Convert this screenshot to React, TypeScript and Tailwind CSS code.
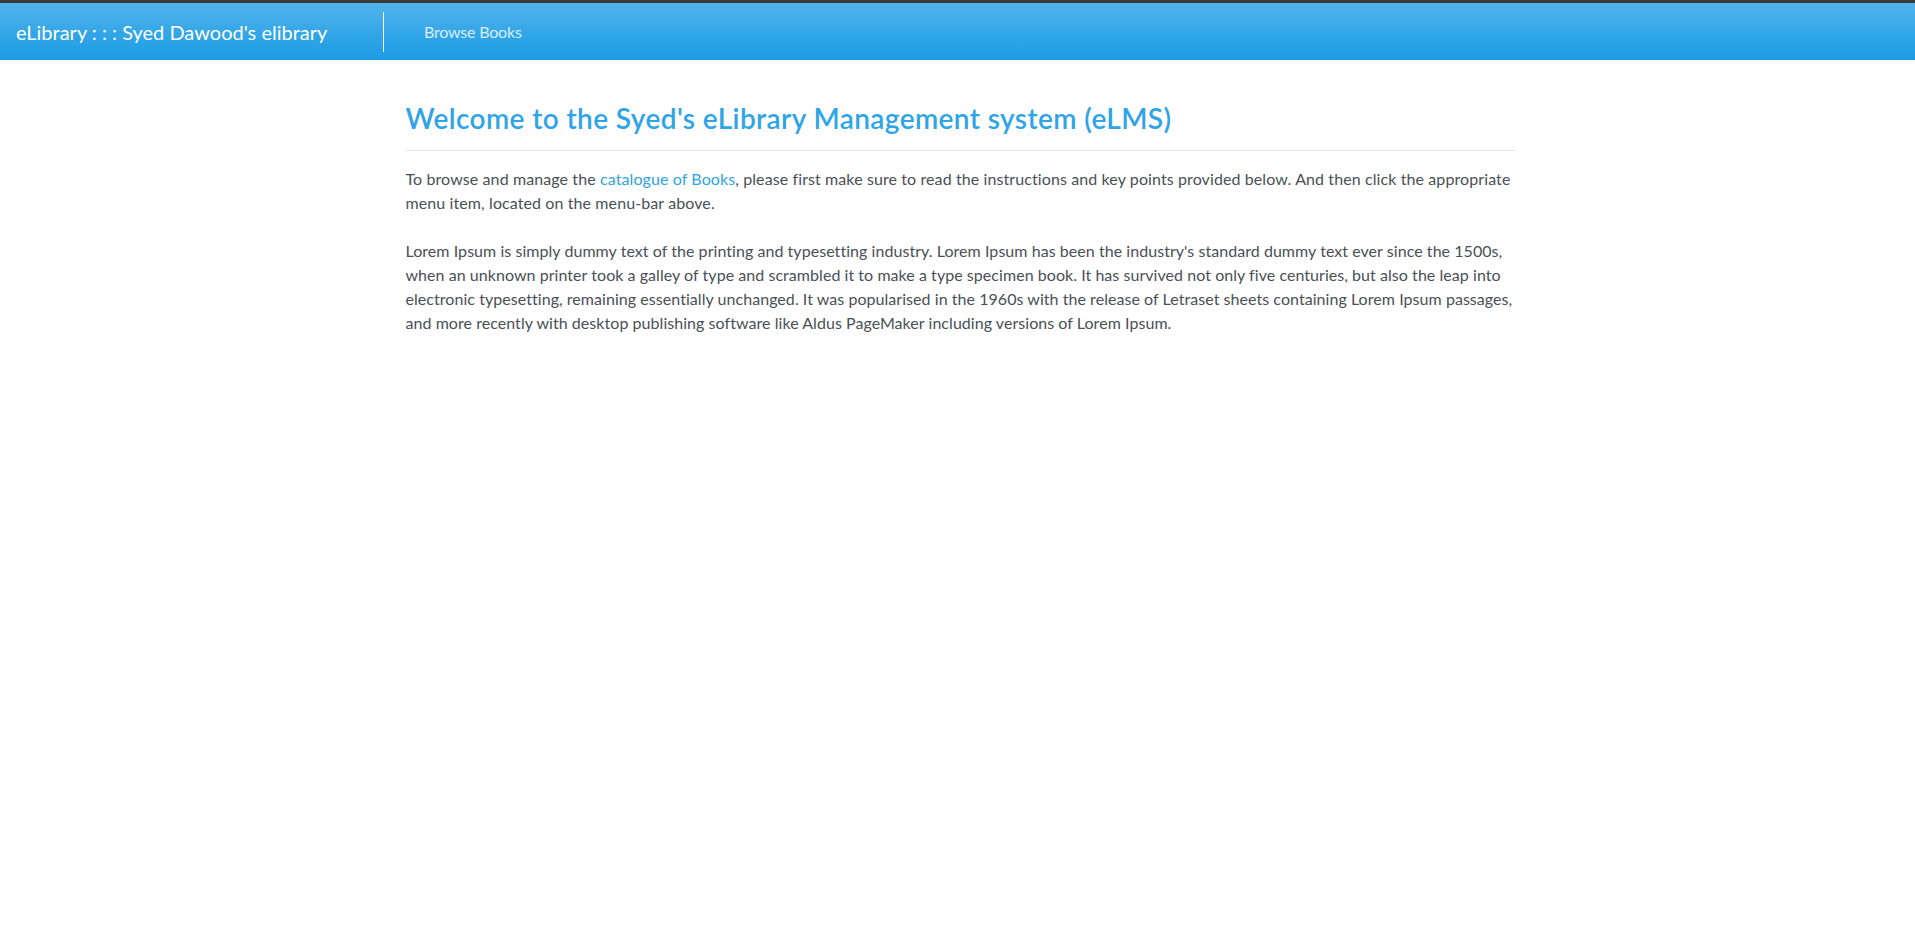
export default function App() {
  return (
    <div className="min-h-screen bg-white font-['Lato','Liberation_Sans',sans-serif]">
      <div className="h-[3px] bg-[#3a3a3a]" />
      <nav className="flex h-[57px] items-center bg-[linear-gradient(#54b4eb,#2fa4e7_60%,#1d9ce5)]">
        <a href="#" className="w-[383px] shrink-0 whitespace-nowrap pl-[16px] text-[20px] text-white">
          eLibrary : : : Syed Dawood's elibrary
        </a>
        <div className="h-[40px] w-px shrink-0 bg-white" />
        <a href="#" className="ml-[40px] whitespace-nowrap text-[16px] tracking-[-0.2px] text-white/80">
          Browse Books
        </a>
      </nav>

      <main className="mx-auto w-[1140px] pl-[18px] pr-[13px]">
        <h2 className="mt-[42px] text-[28px] font-semibold leading-[1.2] tracking-[0.4px] text-[#2fa4e7]">
          Welcome to the Syed's eLibrary Management system (eLMS)
        </h2>
        <hr className="mt-[14px] border-t border-[#e5e5e5]" />
        <p className="mt-[16px] text-[16px] leading-[24px] tracking-[0.1px] text-[#495057]">
          To browse and manage the{" "}
          <a href="#" className="text-[#2fa4e7]">
            catalogue of Books
          </a>
          , please first make sure to read the instructions and key points provided below. And then click the
          appropriate menu item, located on the menu-bar above.
        </p>
        <p className="mt-[24px] text-[16px] leading-[24px] tracking-[0.05px] text-[#495057]">
          Lorem Ipsum is simply dummy text of the printing and typesetting industry. Lorem Ipsum has been the
          industry's standard dummy text ever since the 1500s, when an unknown printer took a galley of type and
          scrambled it to make a type specimen book. It has survived not only five centuries, but also the leap into
          electronic typesetting, remaining essentially unchanged. It was popularised in the 1960s with the release of
          Letraset sheets containing Lorem Ipsum passages, and more recently with desktop publishing software like
          Aldus PageMaker including versions of Lorem Ipsum.
        </p>
      </main>
    </div>
  );
}
